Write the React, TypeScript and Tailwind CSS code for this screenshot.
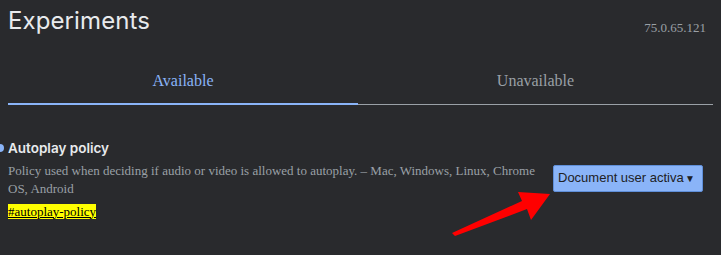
export default function App() {
  return (
    <div className="relative w-[721px] h-[255px] overflow-hidden bg-[#292a2d]">
      <div className="flex items-start justify-between pl-2 pr-[15px] pt-[5px]">
        <h1 className="font-['Inter',sans-serif] text-[24px] leading-[32px] text-[#e8eaed] tracking-[0.1px]">
          Experiments
        </h1>
        <span className="mt-[13px] font-['Liberation_Serif',serif] text-[13px] text-[#9aa0a6]">
          75.0.65.121
        </span>
      </div>

      <div className="mx-2 mt-[28px] grid grid-cols-[350px_1fr] border-b border-[#9aa0a6] font-['Liberation_Serif',serif] text-[16px]">
        <div className="-mb-px border-b-2 border-[#8ab4f8] pt-[3px] pb-[10px] text-center text-[#8ab4f8]">
          Available
        </div>
        <div className="pt-[3px] pb-[10px] text-center text-[#9aa0a6]">Unavailable</div>
      </div>

      <div className="mt-[34px] flex items-start pl-2">
        <div className="w-[540px]">
          <div className="relative font-['Inter',sans-serif] text-[13.5px] font-semibold leading-[18px] text-[#e8eaed]">
            <span className="absolute -left-[12px] top-[5px] h-2 w-2 rounded-full bg-[#8ab4f8]" />
            Autoplay policy
          </div>
          <p className="mt-[5px] font-['Liberation_Serif',serif] text-[13px] leading-[18px] text-[#9aa0a6]">
            Policy used when deciding if audio or video is allowed to autoplay. – Mac, Windows, Linux, Chrome OS,
            Android
          </p>
          <span className="inline-block -mt-[3px] bg-[#ffff00] font-['Liberation_Serif',serif] text-[13px] leading-[15px] text-black underline">
            #autoplay-policy
          </span>
        </div>
        <div className="ml-[5px] mt-[26px] flex h-[27px] w-[150px] shrink-0 items-center justify-between whitespace-nowrap rounded-[2px] border border-[#5f8fd9] bg-[#8ab4f8] pl-[4px] pr-[7px] font-['Liberation_Sans',sans-serif] text-[13px] text-[#202124]">
          <span>Document user activa</span>
          <span className="text-[10px]">▼</span>
        </div>
      </div>

      <svg className="absolute left-0 top-0" width="721" height="255" viewBox="0 0 721 255">
        <polygon
          points="452,233 522,201 518,192 550,194 531,220 527,209 455,236"
          fill="#ff0000"
        />
      </svg>
    </div>
  )
}
